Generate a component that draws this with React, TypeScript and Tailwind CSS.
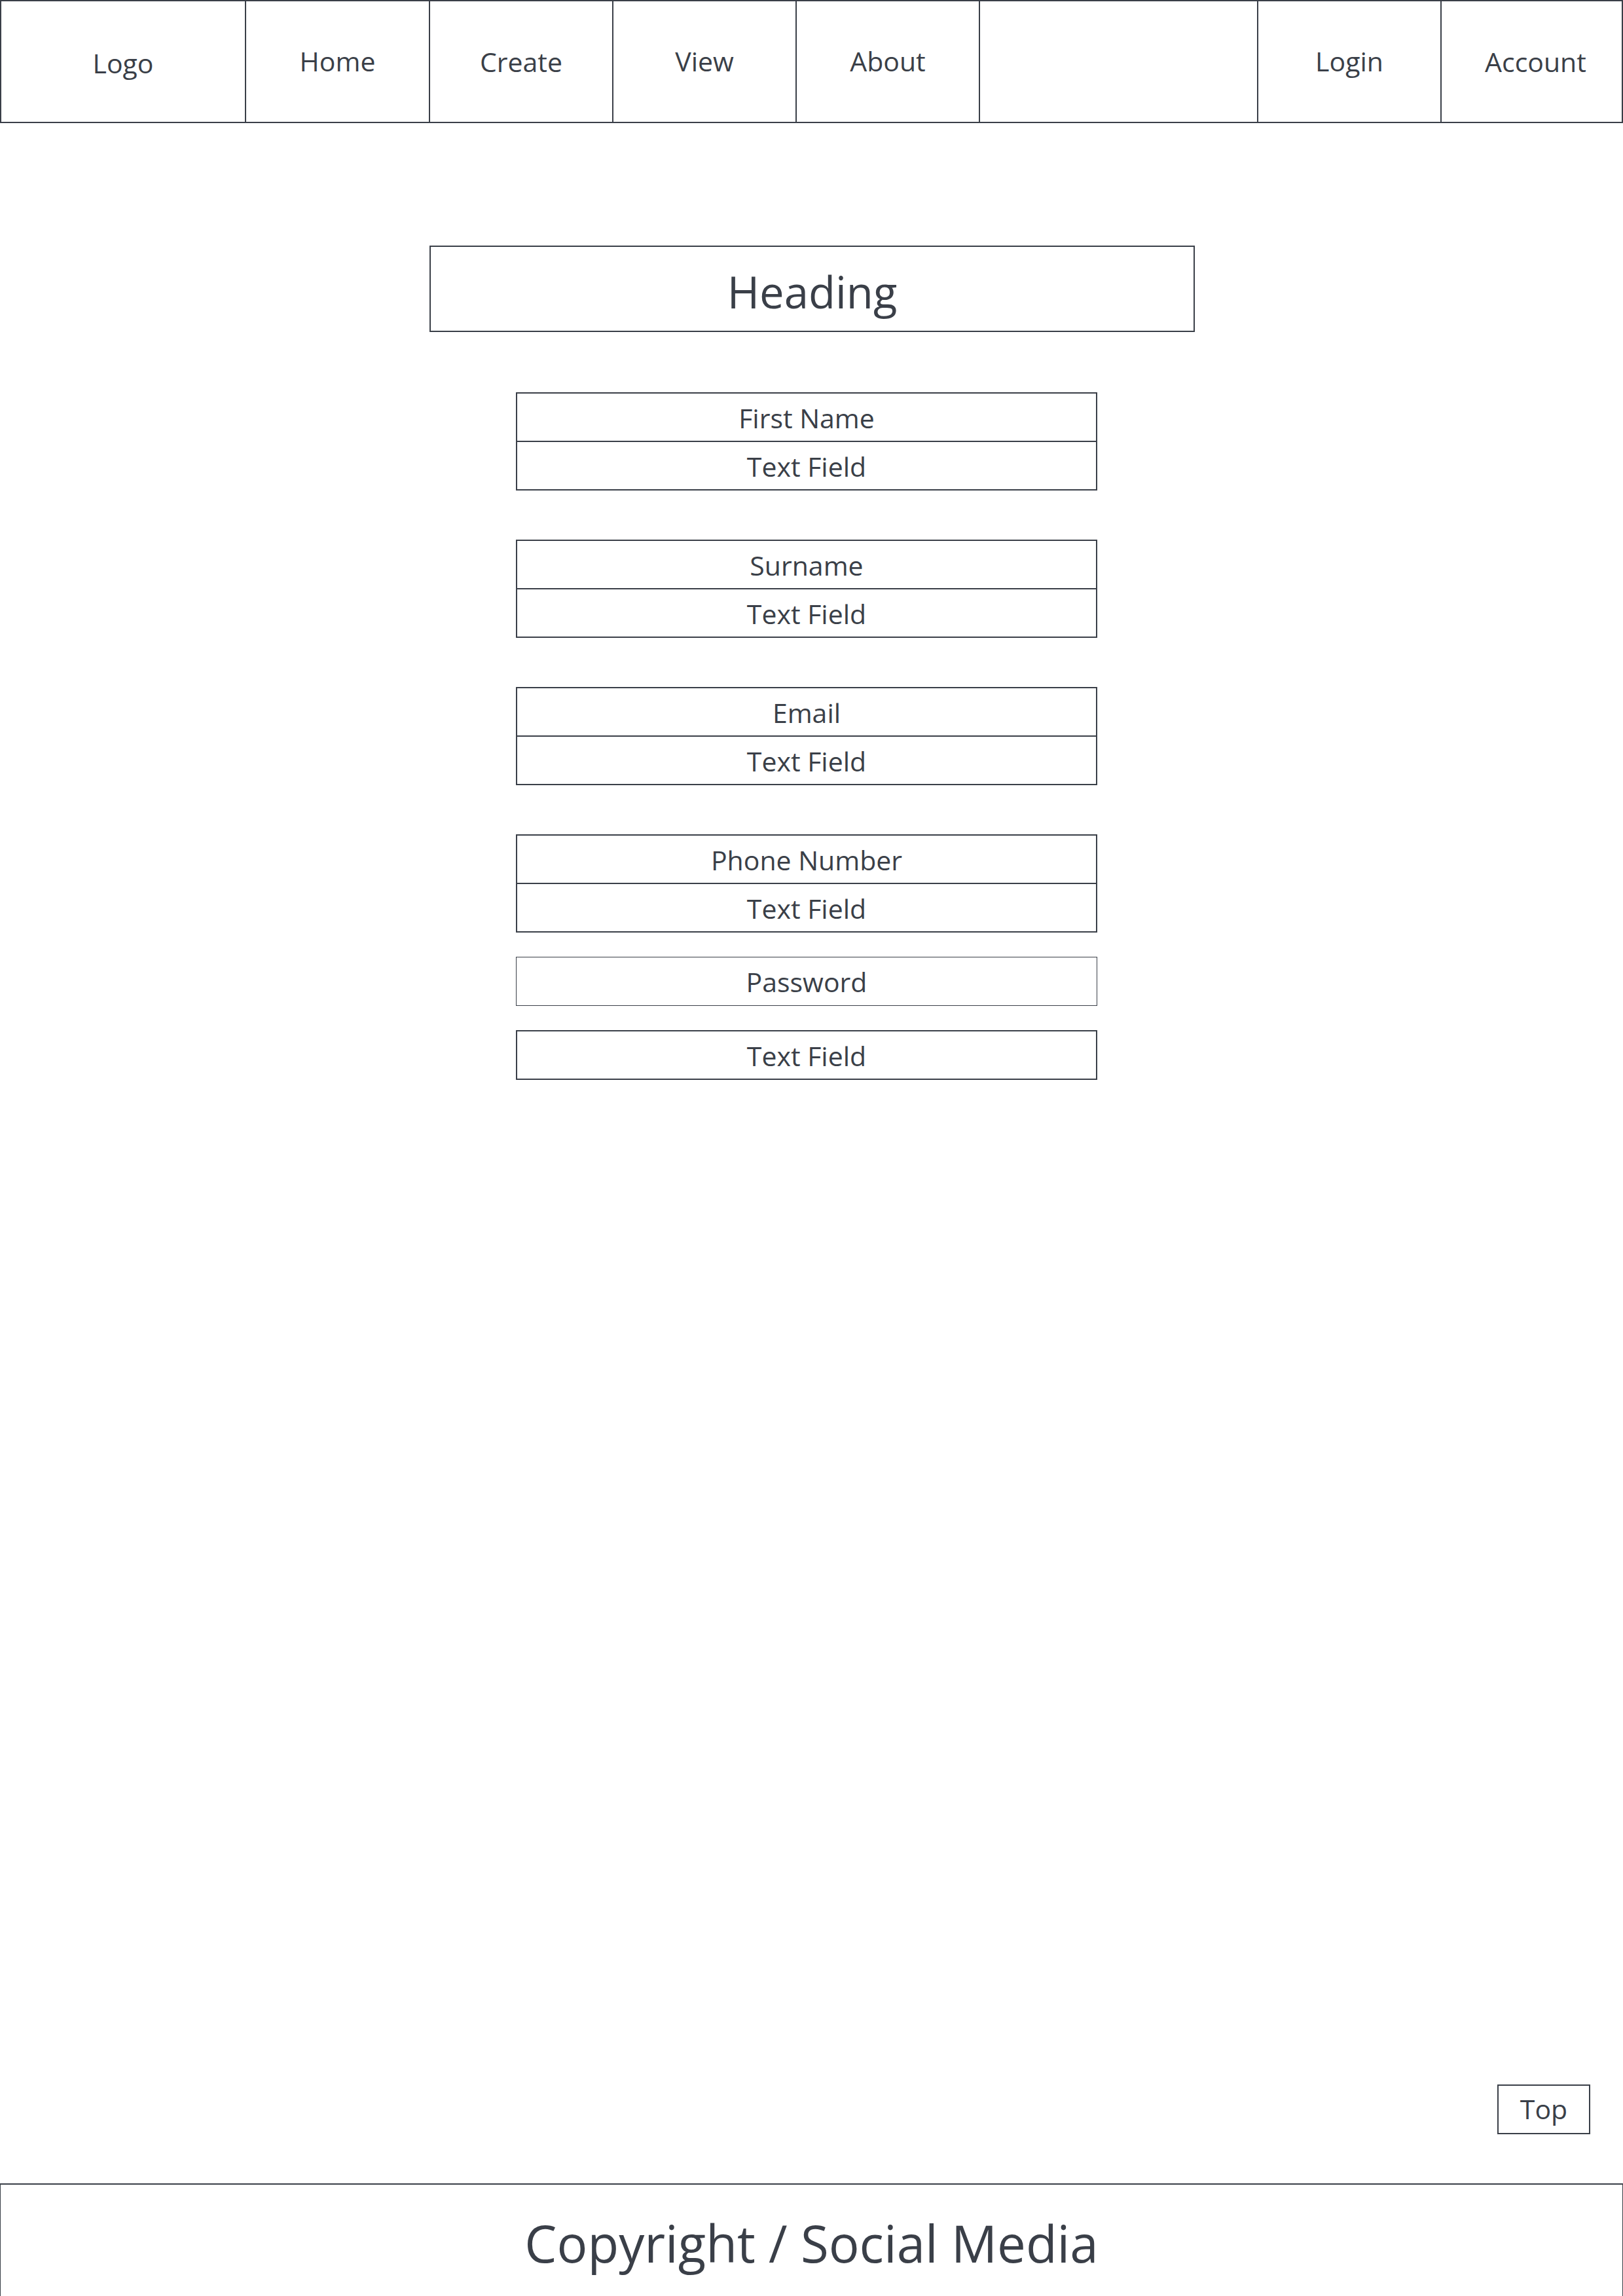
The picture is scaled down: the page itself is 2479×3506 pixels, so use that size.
import React from "react";

const navItems = [
  { label: "Logo", w: "w-[374px]", extra: "pt-[6px]" },
  { label: "Home", w: "w-[281px]", extra: "" },
  { label: "Create", w: "w-[280px]", extra: "pt-[2px]" },
  { label: "View", w: "w-[280px]", extra: "" },
  { label: "About", w: "w-[280px]", extra: "" },
  { label: "", w: "w-[425px]", extra: "" },
  { label: "Login", w: "w-[280px]", extra: "" },
  { label: "Account", w: "flex-1", extra: "pt-[2px] pl-[12px]" },
];

const fields = ["First Name", "Surname", "Email", "Phone Number"];

function Row({ text, className = "" }: { text: string; className?: string }) {
  return (
    <div className={`flex items-center justify-center pt-[3px] text-[41px] ${className}`}>
      {text}
    </div>
  );
}

export default function App() {
  return (
    <div
      className="min-h-[3506px] flex flex-col bg-white text-[#3a3f48]"
      style={{ fontFamily: '"Open Sans", "Noto Sans", sans-serif' }}
    >
      <header className="h-[188px] flex border-2 border-[#3a3f48]">
        {navItems.map((item, i) => (
          <div
            key={i}
            className={`${item.w} ${item.extra} flex items-center justify-center text-[41px] ${
              i < navItems.length - 1 ? "border-r-2 border-[#3a3f48]" : ""
            }`}
          >
            {item.label}
          </div>
        ))}
      </header>

      <main className="flex-1 flex flex-col">
        <div className="mt-[187px] ml-[656px] w-[1169px] h-[132px] pt-[8px] border-2 border-[#3a3f48] flex items-center justify-center text-[67px]">
          Heading
        </div>

        <div className="mt-[92px] ml-[788px] w-[888px] flex flex-col gap-[75px]">
          {fields.map((f) => (
            <div key={f} className="h-[150px] flex flex-col border-2 border-[#3a3f48]">
              <Row text={f} className="h-[74px] border-b-2 border-[#3a3f48]" />
              <Row text="Text Field" className="h-[72px]" />
            </div>
          ))}
        </div>

        <div className="mt-[37px] ml-[788px] w-[888px] flex flex-col gap-[37px]">
          <Row text="Password" className="h-[75px] border border-[#3a3f48]" />
          <Row text="Text Field" className="h-[76px] border-2 border-[#3a3f48]" />
        </div>
      </main>

      <div className="flex justify-end pr-[50px] pb-[75px]">
        <button className="w-[142px] h-[76px] border-2 border-[#3a3f48] flex items-center justify-center text-[41px]">
          Top
        </button>
      </div>

      <footer className="h-[172px] border-t-2 border-x border-[#3a3f48] flex items-center justify-center text-[78px] pt-[8px]">
        Copyright / Social Media
      </footer>
    </div>
  );
}
